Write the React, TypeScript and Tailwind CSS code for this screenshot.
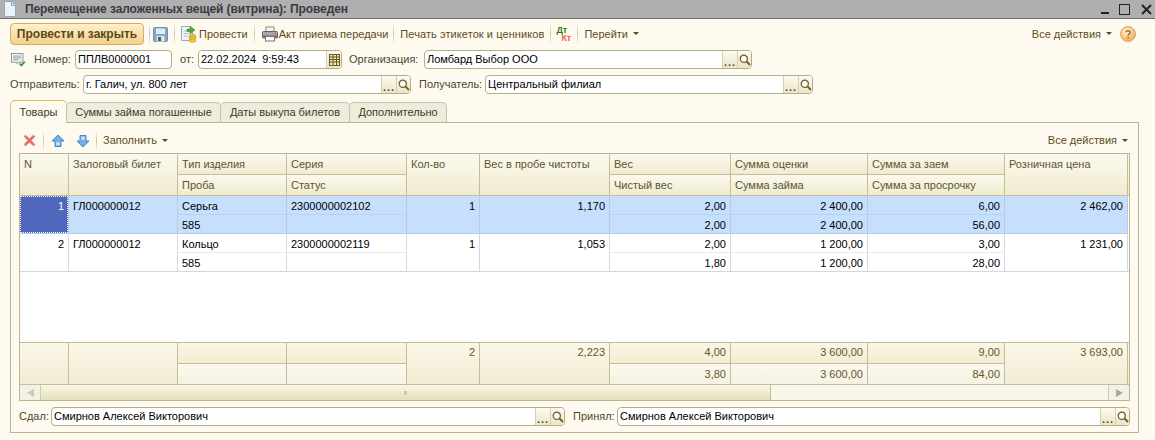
import type { ReactNode } from 'react'

const font = { fontFamily: '"Liberation Sans", Arial, sans-serif' }

function Sep() {
  return <div className="w-px h-[22px] bg-linear-to-b from-[#fefaef] via-[#c9c3a4] to-[#fefaef]" />
}

function Caret() {
  return <span className="inline-block ml-[5px] mb-[1px] border-x-[3px] border-t-[3px] border-x-transparent border-t-[#5a4a1e]" />
}

function DocIcon() {
  return (
    <svg width="14" height="16" viewBox="0 0 14 16">
      <path d="M1.5.5h7l4 4v11h-11z" fill="#eef3fb" stroke="#8fa6c6" />
      <path d="M8.5.5v4h4" fill="#cfdcef" stroke="#8fa6c6" />
    </svg>
  )
}

function FloppyIcon() {
  return (
    <svg width="15" height="15" viewBox="0 0 15 15">
      <rect x=".5" y=".5" width="14" height="14" rx="1" fill="#88a6c9" stroke="#7090b5" />
      <rect x="3" y="1.5" width="9" height="5.5" fill="#e3eaf3" />
      <rect x="3.5" y="9" width="8" height="5.5" fill="#dfe6ee" />
      <rect x="5" y="10" width="3" height="4" fill="#4a5f7a" />
    </svg>
  )
}

function PostIcon() {
  return (
    <svg width="16" height="18" viewBox="0 0 16 18">
      <path d="M.5 1.5h8l3 3v11h-11z" fill="#f3f6fb" stroke="#9aa8bd" />
      <path d="M2.5 6h6M2.5 8.5h5M2.5 11h4" stroke="#a9b6c8" />
      <path d="M9 4V1l5 4-5 4V6.5H6V4z" fill="#57a23c" stroke="#3e7f29" strokeWidth=".5" />
      <ellipse cx="11.5" cy="11" rx="3.5" ry="1.7" fill="#f4c93e" stroke="#b98a14" strokeWidth=".6" />
      <ellipse cx="11.5" cy="13.3" rx="3.5" ry="1.7" fill="#f4c93e" stroke="#b98a14" strokeWidth=".6" />
      <ellipse cx="11.5" cy="15.6" rx="3.5" ry="1.7" fill="#f4c93e" stroke="#b98a14" strokeWidth=".6" />
    </svg>
  )
}

function PrinterIcon() {
  return (
    <svg width="16" height="16" viewBox="0 0 16 16">
      <rect x="4" y="1" width="8" height="5" fill="#f4f4f4" stroke="#8a8a8a" />
      <rect x=".5" y="5.5" width="15" height="6.5" rx="1" fill="#a8a8a8" stroke="#666" />
      <rect x="1" y="9.5" width="14" height="2" fill="#6f6f6f" />
      <rect x="3.5" y="10.5" width="9" height="4.5" fill="#fafafa" stroke="#777" />
      <rect x="12.5" y="7" width="1.5" height="1.2" fill="#e05a3a" />
    </svg>
  )
}

function HelpIcon() {
  return (
    <svg width="16" height="16" viewBox="0 0 16 16">
      <defs>
        <radialGradient id="help" cx="40%" cy="35%" r="70%">
          <stop offset="0%" stopColor="#fff1d2" />
          <stop offset="100%" stopColor="#f0a94d" />
        </radialGradient>
      </defs>
      <circle cx="8" cy="8" r="7.5" fill="url(#help)" stroke="#d9a468" />
      <path d="M5.8 6.2C6 4.6 10 4.4 10.2 6.4c.1 1.6-2.2 1.6-2.2 3.4" fill="none" stroke="#8a5a1a" strokeWidth="1.2" />
      <rect x="7.4" y="11" width="1.3" height="1.4" fill="#8a5a1a" />
    </svg>
  )
}

function MovementsIcon() {
  return (
    <svg width="16" height="14" viewBox="0 0 18 16">
      <rect x=".5" y=".5" width="13" height="10" fill="#eef1f3" stroke="#7f8c94" />
      <path d="M2.5 3.5h9M2.5 5.5h9M2.5 7.5h6" stroke="#8b979e" />
      <path d="M3 10.5h5v3z" fill="#b9c2c7" />
      <path d="M9.5 12l2.2 2.2 4-4.2" fill="none" stroke="#2f9e44" strokeWidth="2" />
    </svg>
  )
}

function CalendarIcon() {
  return (
    <svg width="11" height="12" viewBox="0 0 11 12">
      <rect x=".5" y=".5" width="10" height="11" fill="#f4e9b8" stroke="#6a5a1c" />
      <path d="M.5 3h10M.5 5.5h10M.5 8h10M4 .5v11M7.5.5v11" stroke="#6a5a1c" />
    </svg>
  )
}

function SearchIcon() {
  return (
    <svg width="12" height="12" viewBox="0 0 12 12">
      <circle cx="4.8" cy="4.8" r="3.6" fill="#fffdf5" stroke="#6a5a2a" strokeWidth="1.2" />
      <path d="M7.5 7.5l3.5 3.5" stroke="#7a5a1a" strokeWidth="1.8" />
    </svg>
  )
}

function DeleteIcon() {
  return (
    <svg width="13" height="13" viewBox="0 0 13 13">
      <path d="M2.5 1L6.5 4.6 10.5 1 12 2.5 8.4 6.5 12 10.5 10.5 12 6.5 8.4 2.5 12 1 10.5 4.6 6.5 1 2.5z" fill="#ec6a5e" stroke="#c9a9a0" strokeWidth=".7" />
    </svg>
  )
}

function ArrowIcon({ down }: { down?: boolean }) {
  return (
    <svg width="14" height="14" viewBox="0 0 14 14" className={down ? 'rotate-180' : ''}>
      <path d="M7 1l6 6h-3v5.5H4V7H1z" fill="#6fb0e6" stroke="#4a86b8" />
      <path d="M5 8h4v3.5H5z" fill="#b8dcf6" />
    </svg>
  )
}

function Field({ className, value, buttons = 'select' }: { className: string; value: string; buttons?: 'none' | 'select' | 'date' }) {
  return (
    <div className={`h-[19px] flex rounded-[4px] border border-[#b5ad85] bg-white overflow-hidden ${className}`}>
      <div className="flex-1 min-w-0 pl-[2px] leading-[17px] text-black whitespace-pre">{value}</div>
      {buttons !== 'none' && (
        <div className={`flex w-[15px] items-center justify-center border-l border-[#d5cfae] bg-linear-to-b from-[#fdfaf0] to-[#ebe5c9] ${buttons === 'date' ? '' : 'pt-[5px] font-bold tracking-[1px] text-[#5a4a1e]'}`}>
          {buttons === 'date' ? <CalendarIcon /> : '...'}
        </div>
      )}
      {buttons === 'select' && (
        <div className="flex w-[14px] items-center justify-center border-l border-[#d5cfae] bg-linear-to-b from-[#fdfaf0] to-[#ebe5c9]">
          <SearchIcon />
        </div>
      )}
    </div>
  )
}

function Tab({ label, active, width }: { label: string; active?: boolean; width: string }) {
  return (
    <div
      className={`${width} flex justify-center rounded-t-[5px] border border-[#c9c3a4] ${
        active ? 'h-[23px] -mb-px border-b-0 border-t-[#e3b560] bg-[#fefaef] pt-[3px] text-[#3c3a2c]' : 'h-[20px] border-b-0 -ml-px bg-[#f0ecdc] pt-[1px] text-[#3c3a2c]'
      }`}
    >
      {label}
    </div>
  )
}

const headCell = 'bg-linear-to-b from-[#fbf9ee] to-[#f0ebd0] border-r border-b border-[#c4bd97] pl-[4px] text-[#5d5532] whitespace-nowrap'

function Head({ children, tall }: { children?: ReactNode; tall?: boolean }) {
  return <div className={`${headCell} ${tall ? 'row-span-2 pt-[2px]' : 'h-[21px] leading-[21px]'}`}>{children}</div>
}

function Body({
  children,
  span,
  right,
  sel,
  line,
}: {
  children?: ReactNode
  span?: boolean
  right?: boolean
  sel?: boolean
  line?: boolean
}) {
  const borders = sel
    ? `border-r border-[#b3cbe8] ${line || span ? 'border-b-[#b3cbe8]' : 'border-b-[#b9d2ef]'}`
    : `border-r border-[#d3d9e2] ${line || span ? 'border-b-[#d3d9e2]' : 'border-b-[#ececec]'}`
  return (
    <div
      className={`border-b leading-[20px] whitespace-nowrap text-black ${sel ? 'bg-[#c6dffd]' : 'bg-white'} ${borders} ${
        span ? 'row-span-2' : 'h-[19px]'
      } ${right ? 'text-right pr-[4px]' : 'pl-[4px]'}`}
    >
      {children}
    </div>
  )
}

const rows = [
  { sel: true, n: '1', bilet: 'ГЛ000000012', tip: 'Серьга', seria: '2300000002102', proba: '585', qty: '1', ves585: '1,170', ves: '2,00', chist: '2,00', ocen: '2 400,00', zaim: '2 400,00', zaem: '6,00', prosr: '56,00', price: '2 462,00' },
  { sel: false, n: '2', bilet: 'ГЛ000000012', tip: 'Кольцо', seria: '2300000002119', proba: '585', qty: '1', ves585: '1,053', ves: '2,00', chist: '1,80', ocen: '1 200,00', zaim: '1 200,00', zaem: '3,00', prosr: '28,00', price: '1 231,00' },
]

function Foot({ children, span, line }: { children?: ReactNode; span?: boolean; line?: boolean }) {
  const look = span
    ? 'row-span-2 from-[#fbf8ea] to-[#f1ecd2] pt-[1px]'
    : line
      ? 'h-[20px] leading-[20px] from-[#fbf9f0] to-[#f5f2e2]'
      : 'h-[21px] leading-[18px] border-b from-[#f9f6e6] to-[#f2edd4]'
  return <div className={`bg-linear-to-b border-r border-[#c4bd97] pr-[4px] text-right text-[#66562a] ${look}`}>{children}</div>
}

export default function App() {
  return (
    <div style={font} className="w-[1155px] h-[440px] overflow-hidden bg-[#fefaef] text-[11px] text-[#4b4731]">
      <div className="h-[19px] flex items-center bg-[#afafaf] border-b border-[#6e6e6e] pl-[3px] pr-[3px]">
        <DocIcon />
        <div className="ml-[8px] flex-1 text-[12px] font-bold tracking-[-0.1px] text-[#3a3a44]">Перемещение заложенных вещей (витрина): Проведен</div>
        <div className="flex items-center gap-[4px] text-[#222]">
          <span className="mt-[8px] w-[8px] h-[2px] bg-[#222]" />
          <span className="ml-[6px] w-[11px] h-[11px] border border-[#222]" />
          <svg className="ml-[7px]" width="11" height="11" viewBox="0 0 11 11">
            <path d="M1 1l9 9M10 1l-9 9" stroke="#222" strokeWidth="2" />
          </svg>
        </div>
      </div>

      <div className="h-[26px] flex items-center pl-[10px] pr-[19px] mt-[2px] text-[#5a4d22]">
        <div className="w-[134px] h-[22px] rounded-[4px] border border-[#d6ad5c] bg-linear-to-b from-[#fdf0d0] to-[#f3d08e] text-center leading-[20px] text-[12px] font-bold text-[#5a4a14]">
          Провести и закрыть
        </div>
        <div className="ml-[5px]"><Sep /></div>
        <div className="ml-[3px]"><FloppyIcon /></div>
        <div className="ml-[6px]"><Sep /></div>
        <div className="ml-[6px]"><PostIcon /></div>
        <span className="ml-[2px]">Провести</span>
        <div className="ml-[6px]"><Sep /></div>
        <div className="ml-[7px]"><PrinterIcon /></div>
        <span className="ml-[1px]">Акт приема передачи</span>
        <div className="ml-[5px]"><Sep /></div>
        <span className="ml-[6px] tracking-[0.08px]">Печать этикеток и ценников</span>
        <div className="ml-[6px]"><Sep /></div>
        <div className="ml-[5px] w-[17px] flex flex-col text-[9px] font-bold leading-[8px]">
          <span className="text-[#2f7d1a]">Дт</span>
          <span className="ml-[5px] text-[#ef5a5a]">Кт</span>
        </div>
        <div className="ml-[4px]"><Sep /></div>
        <span className="ml-[6px]">Перейти</span>
        <Caret />
        <span className="ml-auto">Все действия</span>
        <Caret />
        <div className="ml-[8px]"><HelpIcon /></div>
      </div>

      <div className="flex items-center h-[19px] mt-[3px] pl-[11px]">
        <MovementsIcon />
        <span className="ml-[7px] w-[41px]">Номер:</span>
        <Field className="w-[97px]" value="ППЛВ0000001" buttons="none" />
        <span className="ml-[8px] w-[18px]">от:</span>
        <Field className="w-[144px]" value="22.02.2024  9:59:43" buttons="date" />
        <span className="ml-[7px] w-[75px]">Организация:</span>
        <Field className="w-[328px]" value="Ломбард Выбор ООО" />
      </div>

      <div className="flex items-center h-[19px] mt-[6px] pl-[10px]">
        <span className="w-[73px]">Отправитель:</span>
        <Field className="w-[328px]" value="г. Галич, ул. 800 лет" />
        <span className="ml-[8px] w-[66px]">Получатель:</span>
        <Field className="w-[328px]" value="Центральный филиал" />
      </div>

      <div className="flex items-end h-[22px] mt-[6px] pl-[10px] relative z-10">
        <Tab label="Товары" active width="w-[57px]" />
        <Tab label="Суммы займа погашенные" width="w-[155px]" />
        <Tab label="Даты выкупа билетов" width="w-[130px]" />
        <Tab label="Дополнительно" width="w-[98px]" />
      </div>

      <div className="mx-[10px] w-[1129px] h-[311px] border border-[#bdb68c] px-[8px]">
        <div className="flex items-center h-[21px] mt-[7px] mb-[2px] pl-[4px] pr-[2px] text-[#5a4d22]">
          <DeleteIcon />
          <div className="ml-[7px]"><Sep /></div>
          <div className="ml-[7px]"><ArrowIcon /></div>
          <div className="ml-[11px]"><ArrowIcon down /></div>
          <div className="ml-[6px]"><Sep /></div>
          <span className="ml-[6px]">Заполнить</span>
          <Caret />
          <span className="ml-auto">Все действия</span>
          <Caret />
        </div>

        <div className="w-[1111px] border border-[#bdb68c] bg-white overflow-hidden">
          <div className="grid grid-cols-[49px_109px_109px_120px_73px_130px_121px_137px_137px_123px_minmax(0,1fr)] grid-rows-[21px_21px_19px_19px_19px_19px_71px_21px_20px]">
            <Head tall>N</Head>
            <Head tall>Залоговый билет</Head>
            <Head>Тип изделия</Head>
            <Head>Серия</Head>
            <Head tall>Кол-во</Head>
            <Head tall>Вес в пробе чистоты</Head>
            <Head>Вес</Head>
            <Head>Сумма оценки</Head>
            <Head>Сумма за заем</Head>
            <Head tall>Розничная цена</Head>
            <Head tall />
            <Head>Проба</Head>
            <Head>Статус</Head>
            <Head>Чистый вес</Head>
            <Head>Сумма займа</Head>
            <Head>Сумма за просрочку</Head>

            {rows.map(r => [
              r.sel ? (
                <div key={r.n + 'n'} className="row-span-2 border-b border-r border-[#b3cbe8] bg-[#c6dffd]">
                  <div className="h-full border border-dotted border-white bg-[#4f67bd] pr-[3px] text-right leading-[18px] text-white">{r.n}</div>
                </div>
              ) : (
                <Body key={r.n + 'n'} span right>{r.n}</Body>
              ),
              <Body key={r.n + 'b'} span sel={r.sel}>{r.bilet}</Body>,
              <Body key={r.n + 't'} sel={r.sel}>{r.tip}</Body>,
              <Body key={r.n + 's'} sel={r.sel}>{r.seria}</Body>,
              <Body key={r.n + 'q'} span right sel={r.sel}>{r.qty}</Body>,
              <Body key={r.n + 'v'} span right sel={r.sel}>{r.ves585}</Body>,
              <Body key={r.n + 'w'} right sel={r.sel}>{r.ves}</Body>,
              <Body key={r.n + 'o'} right sel={r.sel}>{r.ocen}</Body>,
              <Body key={r.n + 'z'} right sel={r.sel}>{r.zaem}</Body>,
              <Body key={r.n + 'p'} span right sel={r.sel}>{r.price}</Body>,
              <div key={r.n + 'e'} className={`row-span-2 bg-white ${r.sel ? '' : 'border-b border-[#d3d9e2]'}`} />,
              <Body key={r.n + 'pr'} line sel={r.sel}>{r.proba}</Body>,
              <Body key={r.n + 'st'} line sel={r.sel} />,
              <Body key={r.n + 'c'} line right sel={r.sel}>{r.chist}</Body>,
              <Body key={r.n + 'za'} line right sel={r.sel}>{r.zaim}</Body>,
              <Body key={r.n + 'ps'} line right sel={r.sel}>{r.prosr}</Body>,
            ])}

            <div className="col-span-11 bg-white" />

            <div className="col-span-11 grid grid-cols-subgrid grid-rows-subgrid row-span-2 border-t border-[#c4bd97] -mt-px">
              <Foot span />
              <Foot span />
              <Foot />
              <Foot />
              <Foot span>2</Foot>
              <Foot span>2,223</Foot>
              <Foot>4,00</Foot>
              <Foot>3 600,00</Foot>
              <Foot>9,00</Foot>
              <Foot span>3 693,00</Foot>
              <Foot span />
              <Foot line />
              <Foot line />
              <Foot line>3,80</Foot>
              <Foot line>3 600,00</Foot>
              <Foot line>84,00</Foot>
            </div>
          </div>

          <div className="h-[16px] flex border-t border-[#c4bd97] bg-[#f8f6ea]">
            <div className="w-[21px] flex items-center justify-center border-r border-[#cfc9a8] bg-[#f3f1e4]">
              <span className="border-y-[4px] border-r-[7px] border-y-transparent border-r-[#c9c9c0]" />
            </div>
            <div className="w-[730px] border-r border-[#c4bd97] bg-linear-to-b from-[#f9f6e6] to-[#e4dfc0] flex items-center justify-center">
              <span className="w-[3px] h-[4px] bg-[#cfc9a8]" />
            </div>
            <div className="flex-1" />
            <div className="w-[21px] flex items-center justify-center border-l border-[#cfc9a8] bg-[#f3f1e4]">
              <span className="border-y-[4px] border-l-[7px] border-y-transparent border-l-[#a9a99f]" />
            </div>
          </div>
        </div>

        <div className="flex items-center h-[19px] mt-[6px]">
          <span className="w-[32px]">Сдал:</span>
          <Field className="w-[514px]" value="Смирнов Алексей Викторович" />
          <span className="ml-[8px] w-[44px]">Принял:</span>
          <Field className="w-[513px]" value="Смирнов Алексей Викторович" />
        </div>
      </div>
    </div>
  )
}
